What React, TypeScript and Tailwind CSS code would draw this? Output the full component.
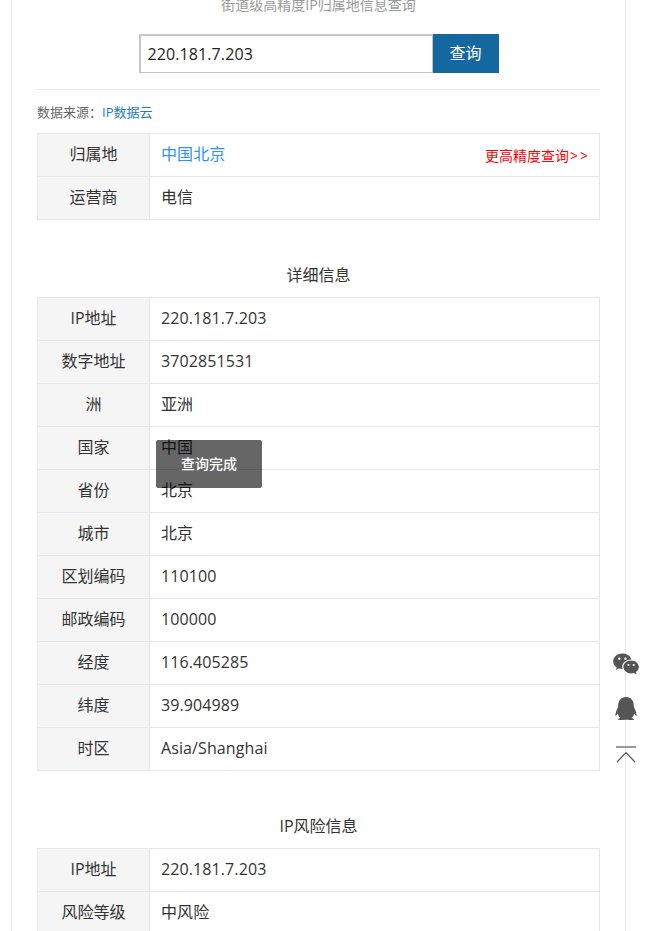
import { RiWechatFill } from 'react-icons/ri';
import { FaQq } from 'react-icons/fa';

const font = "font-['Open_Sans','Noto_Sans_CJK_SC',sans-serif]";

const detailRows = [
  ['IP地址', '220.181.7.203'],
  ['数字地址', '3702851531'],
  ['洲', '亚洲'],
  ['国家', '中国'],
  ['省份', '北京'],
  ['城市', '北京'],
  ['区划编码', '110100'],
  ['邮政编码', '100000'],
  ['经度', '116.405285'],
  ['纬度', '39.904989'],
  ['时区', 'Asia/Shanghai'],
];

const riskRows = [
  ['IP地址', '220.181.7.203'],
  ['风险等级', '中风险'],
];

function Row({ label, children }: { label: string; children: React.ReactNode }) {
  return (
    <div className="flex h-[43px] last:h-[42px] border-b border-[#e7e7e7] last:border-b-0">
      <div className="w-[112px] shrink-0 flex items-center justify-center pb-[3px] bg-[#f5f5f5] border-r border-[#e7e7e7] text-[#333]">
        {label}
      </div>
      <div className="flex-1 flex items-center justify-between pb-[3px] pl-[11px] pr-[11px] tracking-[0.1px] text-[#333]">{children}</div>
    </div>
  );
}

function InfoTable({ rows }: { rows: string[][] }) {
  return (
    <div className="border border-[#e7e7e7] text-[16px]">
      {rows.map(([label, value]) => (
        <Row key={label} label={label}>
          {value}
        </Row>
      ))}
    </div>
  );
}

export default function App() {
  return (
    <div className={`${font} relative h-[931px] w-[656px] overflow-hidden bg-white`}>
      <div className="ml-[11px] w-[615px] h-[1100px] border-x border-[#e7e7e7] px-[25px]">
        {/* Search */}
        <p className="-mt-[5px] h-[20px] leading-[20px] text-center text-[14px] text-[#999]">街道级高精度IP归属地信息查询</p>
        <div className="mt-[19px] flex justify-center">
          <div className="w-[294px] h-[39px] flex items-center pl-[7px] border border-[#c4c4c4] border-t-2 border-l-2 tracking-[0.1px] text-[16px] text-[#222]">
            220.181.7.203
          </div>
          <button className="w-[66px] h-[39px] pb-[2px] bg-[#14689f] text-white text-[16px]">查询</button>
        </div>
        <div className="mt-[16px] border-t border-[#e9e9e9]" />

        {/* Source */}
        <p className="mt-[13px] h-[18px] leading-[18px] text-[13px] text-[#666]">
          数据来源：<span className="text-[#1a7dc0]">IP数据云</span>
        </p>

        <div className="mt-[12px] border border-[#e7e7e7] text-[16px]">
          <Row label="归属地">
            <span className="text-[#2f92f5]">中国北京</span>
            <span className="text-[14px] whitespace-nowrap tracking-normal text-[#f00] mt-[3px]">
              更高精度查询<span className="ml-[1px] tracking-[2px] -mr-[2px]">&gt;&gt;</span>
            </span>
          </Row>
          <Row label="运营商">电信</Row>
        </div>

        {/* Details */}
        <h2 className="mt-[44px] mb-[10px] h-[23px] leading-[23px] text-center text-[16px] font-normal text-[#333]">详细信息</h2>
        <InfoTable rows={detailRows} />

        {/* Risk */}
        <h2 className="mt-[44px] mb-[10px] h-[23px] leading-[23px] text-center text-[16px] font-normal text-[#333]">IP风险信息</h2>
        <InfoTable rows={riskRows} />
      </div>

      {/* Toast */}
      <div className="absolute left-[156px] top-[440px] w-[106px] h-[48px] pb-[1px] rounded-[2px] bg-black/60 flex items-center justify-center text-[14px] font-medium text-white">
        查询完成
      </div>

      {/* Side buttons */}
      <div className="absolute left-[612px] top-[650px] w-[28px] flex flex-col items-center text-[#555]">
        <RiWechatFill className="w-[28px] h-[28px]" />
        <FaQq className="mt-[19px] w-[22px] h-[23px]" preserveAspectRatio="none" />
        <svg className="mt-[26px]" width="22" height="18" viewBox="0 0 22 18" fill="none" stroke="#555" strokeWidth="1.2">
          <path d="M1 1h20" />
          <path d="M2 16 11 6.5 20 16" />
        </svg>
      </div>
    </div>
  );
}
